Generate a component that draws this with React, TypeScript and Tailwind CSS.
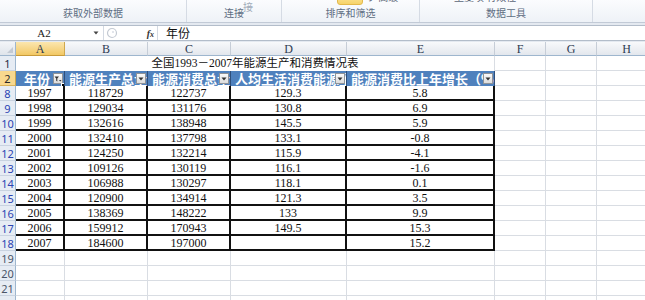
import React from 'react';

const cjk = "font-['Noto_Sans_CJK_SC',sans-serif]";
const serif = "font-['Liberation_Serif','Noto_Sans_CJK_SC',serif]";

const colW = ['w-[49px]', 'w-[83px]', 'w-[83px]', 'w-[116px]', 'w-[148px]', 'w-[51px]', 'w-[51px]', 'w-[60px]'];
const colNames = ['A', 'B', 'C', 'D', 'E', 'F', 'G', 'H'];

const data: (string | number)[][] = [
  [8, '1997', '118729', '122737', '129.3', '5.8'],
  [9, '1998', '129034', '131176', '130.8', '6.9'],
  [10, '1999', '132616', '138948', '145.5', '5.9'],
  [11, '2000', '132410', '137798', '133.1', '-0.8'],
  [12, '2001', '124250', '132214', '115.9', '-4.1'],
  [13, '2002', '109126', '130119', '116.1', '-1.6'],
  [14, '2003', '106988', '130297', '118.1', '0.1'],
  [15, '2004', '120900', '134914', '121.3', '3.5'],
  [16, '2005', '138369', '148222', '133', '9.9'],
  [17, '2006', '159912', '170943', '149.5', '15.3'],
  [18, '2007', '184600', '197000', '', '15.2'],
];

const headers = ['年份', '能源生产总量', '能源消费总量', '人均生活消费能源量', '能源消费比上年增长（%）'];

const RowHead = ({ n, tone }: { n: number; tone: 'blue' | 'dark' | 'active' | 'grey' }) => (
  <div
    className={
      'w-[16px] shrink-0 flex items-center justify-center border-r border-b text-[11px] leading-none font-[\'Liberation_Sans\',sans-serif] ' +
      (tone === 'active'
        ? 'bg-[#f8d88e] border-r-[#c9a54e] border-b-[#d9b35c] text-[#2a2a2a]'
        : 'bg-[#e6ecf4] border-r-[#9eb6ce] border-b-[#c9d3e0] ') +
      (tone === 'blue' ? 'text-[#2b44b3]' : tone === 'dark' ? 'text-[#1e2a44]' : tone === 'grey' ? 'text-[#4a5568]' : '')
    }
  >
    {n}
  </div>
);

const GridCell = ({ i }: { i: number }) => (
  <div className={colW[i] + ' shrink-0 border-r border-b border-[#d9dde3] bg-white'} />
);

const DropBtn = ({ filtered }: { filtered?: boolean }) => (
  <div className="absolute right-[1px] top-[2px] w-[10px] h-[11px] bg-gradient-to-b from-[#fafafa] to-[#dcdcdc] border border-[#8f9398] flex items-center justify-center">
    {filtered ? (
      <svg width="8" height="8" viewBox="0 0 8 8">
        <path d="M0.5 1.5 H5 L3.3 3.6 V6.5 L2.2 5.8 V3.6 Z" fill="#333" />
        <path d="M5 5 L7.5 5 L6.25 6.6 Z" fill="#333" />
      </svg>
    ) : (
      <svg width="6" height="4" viewBox="0 0 6 4">
        <path d="M0.5 0.5 H5.5 L3 3.5 Z" fill="#333" />
      </svg>
    )}
  </div>
);

export default function App() {
  return (
    <div className="w-[645px] h-[300px] overflow-hidden bg-white select-none">
      {/* ribbon */}
      <div className="h-[23px] bg-gradient-to-b from-[#fbfcfe] to-[#eef2f7] border-b border-[#c2cad6] flex relative overflow-hidden">
        <div className="w-[187px] shrink-0 border-r border-[#d5dbe4] flex flex-col items-center justify-end pb-[2px]">
          <span className={cjk + ' text-[10px] text-[#5f6e83] leading-[14px]'}>获取外部数据</span>
        </div>
        <div className="w-[95px] shrink-0 border-r border-[#d5dbe4] flex flex-col items-center justify-end pb-[2px] relative">
          <span className={cjk + ' absolute top-[-11px] left-[56px] text-[10px] text-[#a0aab8] leading-[12px]'}>编辑链接</span>
          <span className={cjk + ' text-[10px] text-[#5f6e83] leading-[14px]'}>连接</span>
        </div>
        <div className="w-[138px] shrink-0 border-r border-[#d5dbe4] flex flex-col items-center justify-end pb-[2px] relative">
          <div className="absolute top-[-7px] left-[55px] w-[26px] h-[12px] rounded-[3px] bg-gradient-to-b from-[#fde9a0] to-[#f6d36a] border border-[#e4b94c]" />
          <span className={cjk + ' absolute top-[-9px] left-[84px] text-[10px] text-[#5a6577] leading-[12px]'}>ッ 高级</span>
          <span className={cjk + ' text-[10px] text-[#5f6e83] leading-[14px]'}>排序和筛选</span>
        </div>
        <div className="w-[173px] shrink-0 border-r border-[#d5dbe4] flex flex-col items-center justify-end pb-[2px] relative">
          <span className={cjk + ' absolute top-[-9px] left-[34px] text-[10px] text-[#5a6577] leading-[12px]'}>重复项 有效性</span>
          <span className={cjk + ' text-[10px] text-[#5f6e83] leading-[14px]'}>数据工具</span>
        </div>
        <div className="flex-1" />
      </div>
      <div className="h-[2px] bg-[#e4e9f0]" />

      {/* formula bar */}
      <div className="h-[14px] flex bg-white border-y border-[#b3bdca] box-content">
        <div className="w-[88px] shrink-0 flex items-center justify-center text-[11px] font-['Liberation_Serif',serif] text-[#222]">A2</div>
        <div className="w-[15px] shrink-0 flex items-center justify-center">
          <svg width="6" height="4" viewBox="0 0 6 4">
            <path d="M0.5 0.5 H5.5 L3 3.5 Z" fill="#444" />
          </svg>
        </div>
        <div className="w-[55px] shrink-0 flex items-center border-l border-[#d3d9e2] border-r pl-[2px] pr-[3px]">
          <svg width="12" height="12" viewBox="0 0 12 12">
            <circle cx="6" cy="6" r="4.5" fill="none" stroke="#c4cad3" strokeWidth="1.2" />
            <circle cx="7" cy="5" r="1" fill="#d8dde4" />
          </svg>
          <div className="flex-1" />
          <span className="text-[10px] italic font-['Liberation_Serif',serif] font-bold text-[#333]">
            f<span className="text-[8px]">x</span>
          </span>
        </div>
        <div className={cjk + ' flex-1 flex items-center pl-[8px] text-[12px] text-[#111]'}>年份</div>
      </div>
      <div className="h-[1px] bg-[#e4e9f0]" />

      {/* column headers */}
      <div className="flex h-[14px]">
        <div className="w-[16px] shrink-0 bg-gradient-to-b from-[#f3f5f8] to-[#dfe4eb] border-r border-b border-[#9eb6ce] relative">
          <svg className="absolute right-[2px] bottom-[2px]" width="6" height="6" viewBox="0 0 6 6">
            <path d="M6 0 V6 H0 Z" fill="#c3cad4" />
          </svg>
        </div>
        {colNames.map((c, i) => (
          <div
            key={c}
            className={
              colW[i] +
              " shrink-0 flex items-center justify-center border-r border-b text-[12px] font-['Liberation_Serif',serif] text-[#2d3b52] " +
              (i === 0
                ? 'bg-gradient-to-b from-[#fbe6ae] to-[#f2c863] border-r-[#cfa84f] border-b-[#c89a3a]'
                : 'bg-gradient-to-b from-[#f8f9fb] to-[#e3e7ed] border-r-[#c6cdd7] border-b-[#9eb6ce]')
            }
          >
            {c}
          </div>
        ))}
      </div>

      {/* row 1 : title */}
      <div className="flex h-[15px]">
        <RowHead n={1} tone="dark" />
        <div className={'w-[479px] shrink-0 flex items-center justify-center border-r border-[#d9dde3] bg-white text-[11.5px] text-[#111] ' + serif}>
          全国1993－2007年能源生产和消费情况表
        </div>
        <GridCell i={5} />
        <GridCell i={6} />
        <GridCell i={7} />
      </div>

      {/* row 2 : table header */}
      <div className="flex h-[15px]">
        <RowHead n={2} tone="active" />
        {headers.map((h, i) => (
          <div
            key={h}
            className={
              colW[i] +
              ' shrink-0 relative overflow-hidden bg-[#4f81bd] border-r border-[#2f4f7a] flex items-center text-[13px] font-bold text-white whitespace-nowrap leading-none ' +
              cjk +
              (i === 0 ? ' justify-center pr-[6px]' : ' pl-[4px]')
            }
          >
            {h}
            <DropBtn filtered={i === 0} />
            {i === 0 && (
              <div className="absolute right-[-1px] bottom-[-1px] w-[4px] h-[4px] bg-black border border-white" />
            )}
          </div>
        ))}
        <GridCell i={5} />
        <GridCell i={6} />
        <GridCell i={7} />
      </div>

      {/* data rows */}
      {data.map((r) => (
        <div key={r[0]} className="flex h-[15px]">
          <RowHead n={r[0] as number} tone="blue" />
          {r.slice(1).map((v, i) => (
            <div
              key={i}
              className={
                colW[i] +
                ' shrink-0 bg-white border-r-2 border-b-2 border-[#111] flex items-center justify-center text-[12px] leading-none text-[#111] ' +
                serif
              }
            >
              {v}
            </div>
          ))}
          <GridCell i={5} />
          <GridCell i={6} />
          <GridCell i={7} />
        </div>
      ))}

      {/* empty rows */}
      {[19, 20, 21, 22].map((n) => (
        <div key={n} className="flex h-[15px]">
          <RowHead n={n} tone="grey" />
          {colNames.map((c, i) => (
            <GridCell key={c} i={i} />
          ))}
        </div>
      ))}
    </div>
  );
}
